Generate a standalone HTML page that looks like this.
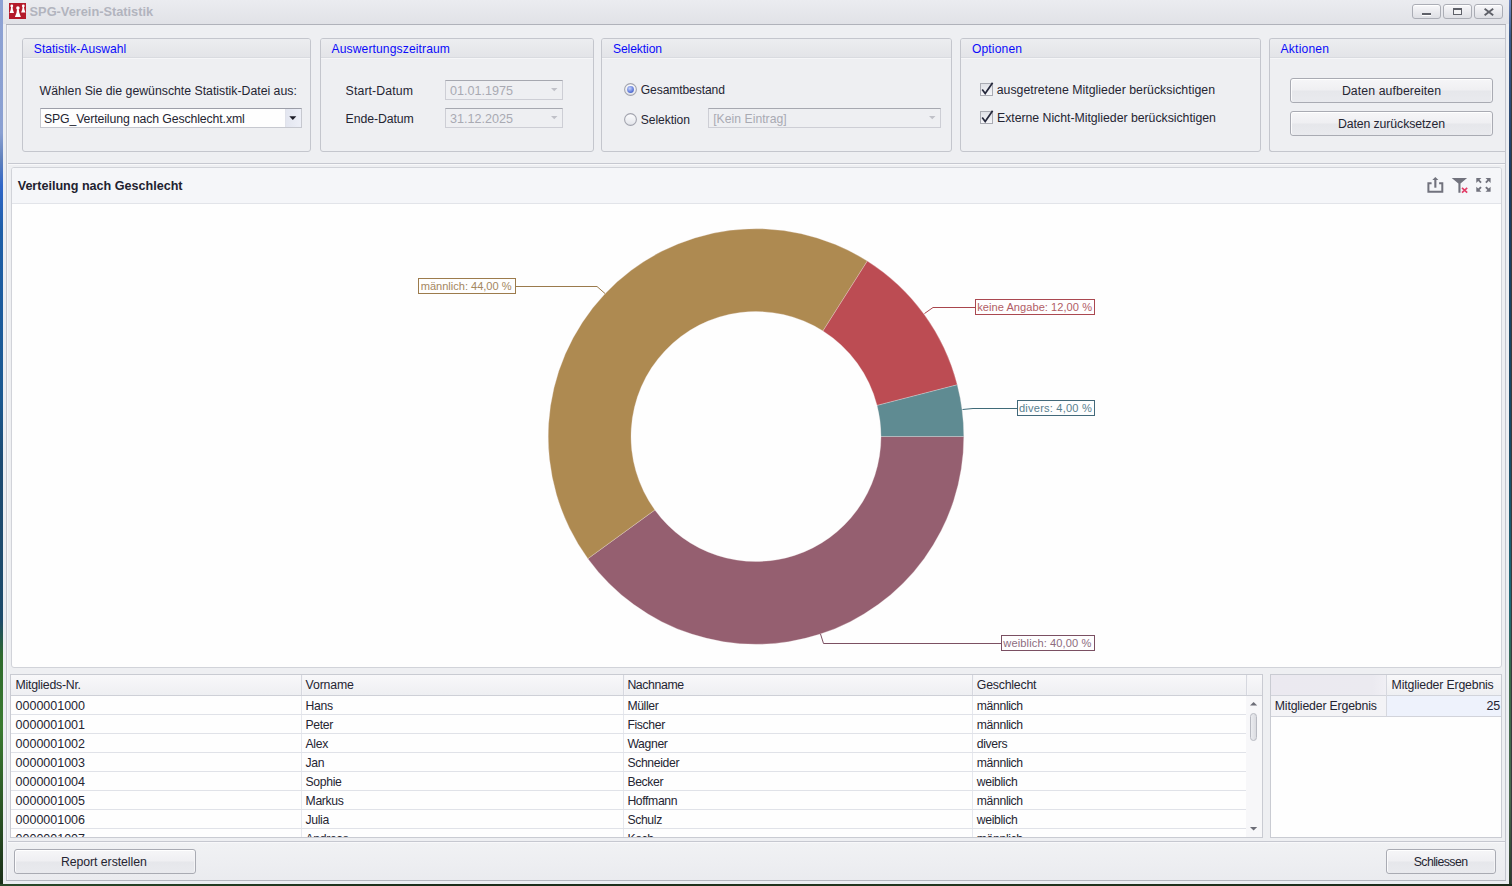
<!DOCTYPE html><html><head><meta charset="utf-8"><style>
*{margin:0;padding:0;box-sizing:border-box}
html,body{width:1512px;height:886px;overflow:hidden;background:#1d3322}
body{position:relative;font-family:"Liberation Sans",sans-serif}
.t{position:absolute;white-space:nowrap;line-height:14px}
.btn{position:absolute;border:1px solid #a9abb3;border-radius:3px;background:linear-gradient(#f6f6f8 0%,#efeff2 48%,#e6e7eb 52%,#e9eaee 100%);box-shadow:inset 0 1px 0 #fff,inset 1px 0 0 #fbfbfc,inset -1px 0 0 #f4f4f6}
</style></head><body><div style="position:absolute;left:0px;top:0px;width:3px;height:886px;background:linear-gradient(#8ea2d4 0%,#8aa0d2 15%,#5f80bc 18%,#2f66c8 21%,#1c5ea8 26%,#1a5890 45%,#1b4a72 52%,#1d4a6a 70%,#2e6a2c 74%,#3a7a30 82%,#2a5224 92%,#1a2e18 100%)"></div>
<div style="position:absolute;left:1509px;top:0px;width:2px;height:886px;background:linear-gradient(#7088c0 0%,#3a5a8a 4%,#1c3c62 20%,#1a4a66 50%,#1e6a78 68%,#3a6a4a 76%,#4a6a50 90%,#2a3a2a 100%)"></div>
<div style="position:absolute;left:1511px;top:0px;width:1px;height:886px;background:#3a3a3c"></div>
<div style="position:absolute;left:0px;top:884px;width:1512px;height:2px;background:linear-gradient(90deg,#2a4a2a,#1c2c1a 30%,#23361f 60%,#1c2a1a)"></div>
<div style="position:absolute;left:3px;top:0px;width:1506px;height:884px;background:#eceef2"></div>
<div style="position:absolute;left:3px;top:0px;width:1506px;height:24px;background:linear-gradient(#ebecf0,#e1e2e7)"></div>
<div style="position:absolute;left:6px;top:24px;width:1500px;height:1px;background:#b0b2ba"></div>
<div style="position:absolute;left:6px;top:25px;width:1px;height:856px;background:#c4c6ce"></div>
<div style="position:absolute;left:7px;top:25px;width:1px;height:855px;background:#f6f7f9"></div>
<div style="position:absolute;left:1505px;top:25px;width:1px;height:856px;background:#c4c6ce"></div>
<div style="position:absolute;left:6px;top:880px;width:1500px;height:1px;background:#b6b8c0"></div>
<div style="position:absolute;left:8px;top:25px;width:1497px;height:855px;background:#eeeff2"></div>
<svg style="position:absolute;left:9px;top:3px" width="17" height="16" viewBox="0 0 17 16">
<rect width="17" height="16" fill="#b41a2a"/>
<g fill="#fff">
<circle cx="2.8" cy="3.0" r="1.4"/><path d="M2.1 4.1 h1.4 l0.4 2.6 l1.1 3.3 h-4.4 l1.1 -3.3 z"/>
<circle cx="14.3" cy="2.9" r="1.4"/><path d="M13.6 4.0 h1.4 l0.4 2.5 l1.1 3.0 h-4.4 l1.1 -3.0 z"/>
<circle cx="8.9" cy="4.9" r="1.75"/><path d="M8.0 6.3 h1.8 l0.5 3.4 l1.6 4.2 h-6.0 l1.6 -4.2 z"/>
</g></svg>
<div class="t" style="left:29.60px;top:5px;font-size:12.8px;color:#b2b4be;font-weight:bold;letter-spacing:-0.011px;">SPG-Verein-Statistik</div>
<div style="position:absolute;left:1412px;top:4px;width:29px;height:15px;border:1px solid #abadb5;border-radius:3px;background:linear-gradient(#f8f8fa 0%,#ebebef 50%,#dedfe4 100%);box-shadow:inset 0 1px 0 #fff"><div style="position:absolute;left:9px;top:8px;width:9px;height:2px;background:#5e6068;box-shadow:0 1px 0 #fff"></div></div>
<div style="position:absolute;left:1443px;top:4px;width:29px;height:15px;border:1px solid #abadb5;border-radius:3px;background:linear-gradient(#f8f8fa 0%,#ebebef 50%,#dedfe4 100%);box-shadow:inset 0 1px 0 #fff"><div style="position:absolute;left:9px;top:3px;width:9px;height:7px;border:1.5px solid #5e6068;border-top-width:2px;background:#f2f2f4"></div></div>
<div style="position:absolute;left:1474px;top:4px;width:29px;height:15px;border:1px solid #abadb5;border-radius:3px;background:linear-gradient(#f8f8fa 0%,#ebebef 50%,#dedfe4 100%);box-shadow:inset 0 1px 0 #fff"><svg style="position:absolute;left:8px;top:3px" width="12" height="8" viewBox="0 0 12 8"><path d="M1.6 0.8 L10.2 7.2 M10.2 0.8 L1.6 7.2" stroke="#5e6068" stroke-width="1.9"/></svg></div>
<div style="position:absolute;left:8px;top:163px;width:1497px;height:1px;background:#c6c8d0"></div>
<div style="position:absolute;left:8px;top:164px;width:1497px;height:1px;background:#f8f8fa"></div>
<div style="position:absolute;left:22px;top:38px;width:289px;height:114px;border:1px solid #c4c6cd;border-radius:3px;background:#eeeff2;overflow:hidden"><div style="position:absolute;left:0;top:0;right:0;height:19px;background:linear-gradient(#ecedf0,#e3e4e8);border-bottom:1px solid #d9dbe0;box-shadow:0 1px 0 #f6f6f8"></div></div>
<div class="t" style="left:33.80px;top:42px;font-size:12.1px;color:#0b0bfa;font-weight:normal;letter-spacing:0.016px;">Statistik-Auswahl</div>
<div style="position:absolute;left:320px;top:38px;width:274px;height:114px;border:1px solid #c4c6cd;border-radius:3px;background:#eeeff2;overflow:hidden"><div style="position:absolute;left:0;top:0;right:0;height:19px;background:linear-gradient(#ecedf0,#e3e4e8);border-bottom:1px solid #d9dbe0;box-shadow:0 1px 0 #f6f6f8"></div></div>
<div class="t" style="left:331.50px;top:42px;font-size:12.1px;color:#0b0bfa;font-weight:normal;letter-spacing:0.119px;">Auswertungszeitraum</div>
<div style="position:absolute;left:601px;top:38px;width:351px;height:114px;border:1px solid #c4c6cd;border-radius:3px;background:#eeeff2;overflow:hidden"><div style="position:absolute;left:0;top:0;right:0;height:19px;background:linear-gradient(#ecedf0,#e3e4e8);border-bottom:1px solid #d9dbe0;box-shadow:0 1px 0 #f6f6f8"></div></div>
<div class="t" style="left:612.90px;top:42px;font-size:12.1px;color:#0b0bfa;font-weight:normal;letter-spacing:-0.075px;">Selektion</div>
<div style="position:absolute;left:960px;top:38px;width:301px;height:114px;border:1px solid #c4c6cd;border-radius:3px;background:#eeeff2;overflow:hidden"><div style="position:absolute;left:0;top:0;right:0;height:19px;background:linear-gradient(#ecedf0,#e3e4e8);border-bottom:1px solid #d9dbe0;box-shadow:0 1px 0 #f6f6f8"></div></div>
<div class="t" style="left:971.90px;top:42px;font-size:12.1px;color:#0b0bfa;font-weight:normal;letter-spacing:0.157px;">Optionen</div>
<div style="position:absolute;left:1269px;top:38px;width:236px;height:114px;border:1px solid #c4c6cd;border-radius:3px;border-right:none;border-radius:3px 0 0 3px;background:#eeeff2;overflow:hidden"><div style="position:absolute;left:0;top:0;right:0;height:19px;background:linear-gradient(#ecedf0,#e3e4e8);border-bottom:1px solid #d9dbe0;box-shadow:0 1px 0 #f6f6f8"></div></div>
<div class="t" style="left:1280.60px;top:42px;font-size:12.1px;color:#0b0bfa;font-weight:normal;letter-spacing:0.186px;">Aktionen</div>
<div class="t" style="left:39.60px;top:84px;font-size:12.3px;color:#252532;font-weight:normal;letter-spacing:-0.010px;">Wählen Sie die gewünschte Statistik-Datei aus:</div>
<div style="position:absolute;left:40px;top:108px;width:262px;height:20px;border:1px solid #c6c8cf;border-top-color:#9c9ea8;background:#fefefe"></div>
<div style="position:absolute;left:285px;top:109px;width:16px;height:18px;background:linear-gradient(90deg,#e3e6f0,#edeff7);border-left:1px solid #e0e2ea"></div>
<svg style="position:absolute;left:289px;top:116px" width="8" height="5"><path d="M0.3 0.3 L7.3 0.3 L3.8 4 Z" fill="#1d1d28"/></svg>
<div class="t" style="left:43.90px;top:112px;font-size:12.3px;color:#252532;font-weight:normal;letter-spacing:-0.127px;">SPG_Verteilung nach Geschlecht.xml</div>
<div class="t" style="left:345.60px;top:84px;font-size:12.3px;color:#252532;font-weight:normal;letter-spacing:0.110px;">Start-Datum</div>
<div class="t" style="left:345.60px;top:112px;font-size:12.3px;color:#252532;font-weight:normal;letter-spacing:-0.106px;">Ende-Datum</div>
<div style="position:absolute;left:445px;top:80px;width:118px;height:20px;border:1px solid #cdced5;border-top-color:#a6a8b0;background:#eeeff2"></div>
<svg style="position:absolute;left:551px;top:88px" width="7" height="4"><path d="M0 0 L6.5 0 L3.25 3.2 Z" fill="#c0c1c8"/></svg>
<div class="t" style="left:449.90px;top:84px;font-size:12.6px;color:#a9aab3;font-weight:normal;letter-spacing:0.017px;">01.01.1975</div>
<div style="position:absolute;left:445px;top:108px;width:118px;height:20px;border:1px solid #cdced5;border-top-color:#a6a8b0;background:#eeeff2"></div>
<svg style="position:absolute;left:551px;top:116px" width="7" height="4"><path d="M0 0 L6.5 0 L3.25 3.2 Z" fill="#c0c1c8"/></svg>
<div class="t" style="left:449.90px;top:112px;font-size:12.6px;color:#a9aab3;font-weight:normal;letter-spacing:0.017px;">31.12.2025</div>
<svg style="position:absolute;left:0;top:0;width:0;height:0"><defs>
<radialGradient id="rg" cx="0.4" cy="0.35" r="0.75"><stop offset="0" stop-color="#c8d4fa"/><stop offset="0.6" stop-color="#6f88e0"/><stop offset="1" stop-color="#3a56c0"/></radialGradient>
<linearGradient id="rb" x1="0" y1="0" x2="0" y2="1"><stop offset="0" stop-color="#fdfdfe"/><stop offset="1" stop-color="#e2e4ea"/></linearGradient>
</defs></svg>
<svg style="position:absolute;left:623.5px;top:82.9px" width="13" height="13" viewBox="0 0 13 13"><circle cx="6.5" cy="6.5" r="5.9" fill="url(#rb)" stroke="#a2a4ae" stroke-width="1.1"/><circle cx="6.5" cy="6.5" r="3.4" fill="url(#rg)"/></svg>
<svg style="position:absolute;left:623.5px;top:113.0px" width="13" height="13" viewBox="0 0 13 13"><circle cx="6.5" cy="6.5" r="5.9" fill="url(#rb)" stroke="#a2a4ae" stroke-width="1.1"/></svg>
<div class="t" style="left:640.80px;top:83px;font-size:12.1px;color:#252532;font-weight:normal;letter-spacing:-0.108px;">Gesamtbestand</div>
<div class="t" style="left:640.80px;top:113px;font-size:12.1px;color:#252532;font-weight:normal;letter-spacing:-0.075px;">Selektion</div>
<div style="position:absolute;left:708px;top:108px;width:233px;height:20px;border:1px solid #cdced5;border-top-color:#a6a8b0;background:#eeeff2"></div>
<svg style="position:absolute;left:929px;top:116px" width="7" height="4"><path d="M0 0 L6.5 0 L3.25 3.2 Z" fill="#c0c1c8"/></svg>
<div class="t" style="left:713.20px;top:112px;font-size:12.2px;color:#a9aab3;font-weight:normal;letter-spacing:0.027px;">[Kein Eintrag]</div>
<div style="position:absolute;left:980px;top:83px;width:13px;height:13px;border:1px solid #a9abb3;background:linear-gradient(#dfe1e7,#f6f6f9)"></div>
<svg style="position:absolute;left:980px;top:82px" width="14" height="14" viewBox="0 0 14 14"><path d="M2.2 7.6 L5.2 11.6 L12.6 0.8" fill="none" stroke="#25283c" stroke-width="1.7"/></svg>
<div style="position:absolute;left:980px;top:111px;width:13px;height:13px;border:1px solid #a9abb3;background:linear-gradient(#dfe1e7,#f6f6f9)"></div>
<svg style="position:absolute;left:980px;top:110px" width="14" height="14" viewBox="0 0 14 14"><path d="M2.2 7.6 L5.2 11.6 L12.6 0.8" fill="none" stroke="#25283c" stroke-width="1.7"/></svg>
<div class="t" style="left:996.70px;top:83px;font-size:12.3px;color:#252532;font-weight:normal;letter-spacing:0.024px;">ausgetretene Mitglieder berücksichtigen</div>
<div class="t" style="left:997.00px;top:111px;font-size:12.3px;color:#252532;font-weight:normal;letter-spacing:-0.029px;">Externe Nicht-Mitglieder berücksichtigen</div>
<div class="btn" style="left:1290px;top:78px;width:203px;height:25px"></div>
<div class="btn" style="left:1290px;top:111px;width:203px;height:25px"></div>
<div class="t" style="left:1341.90px;top:84px;font-size:12.3px;color:#252532;font-weight:normal;letter-spacing:0.087px;">Daten aufbereiten</div>
<div class="t" style="left:1337.90px;top:117px;font-size:12.3px;color:#252532;font-weight:normal;letter-spacing:-0.094px;">Daten zurücksetzen</div>
<div style="position:absolute;left:11px;top:167px;width:1491px;height:501px;border:1px solid #d1d3d9;border-radius:3px;background:#fefefe;overflow:hidden"><div style="position:absolute;left:0;top:0;right:0;height:36px;background:#f5f6f9;border-bottom:1px solid #e2e4e9"></div></div>
<div class="t" style="left:17.70px;top:179px;font-size:12.6px;color:#222230;font-weight:bold;letter-spacing:-0.014px;">Verteilung nach Geschlecht</div>
<svg style="position:absolute;left:1420px;top:170px" width="80" height="30" viewBox="0 0 80 30">
<g fill="#71727d">
<path d="M7.4 12.2 h4.2 v2 h-2.2 v6.6 h11.9 v-6.6 h-2.2 v-2 h4.2 v10.6 h-15.9 z"/>
<rect x="14.3" y="9.4" width="2.1" height="8.3"/>
<path d="M12.3 9.9 L15.35 6.9 L18.4 9.9 Z"/>
<path d="M31.7 7.9 H47.1 L40.5 13.6 V22.8 H38.4 V13.6 Z"/>
<path d="M56.3 7.9 h5.1 l-1.9 1.9 l2.2 2.2 l-1.3 1.3 l-2.2 -2.2 l-1.9 1.9 z"/>
<path d="M70.6 7.9 h-5.1 l1.9 1.9 l-2.2 2.2 l1.3 1.3 l2.2 -2.2 l1.9 1.9 z"/>
<path d="M56.3 21.8 h5.1 l-1.9 -1.9 l2.2 -2.2 l-1.3 -1.3 l-2.2 2.2 l-1.9 -1.9 z"/>
<path d="M70.6 21.8 h-5.1 l1.9 -1.9 l-2.2 -2.2 l1.3 -1.3 l2.2 2.2 l1.9 -1.9 z"/>
</g>
<path d="M42 17.8 L47.2 22.6 M47.2 17.8 L42 22.6" stroke="#e23c66" stroke-width="1.6"/>
</svg>
<svg style="position:absolute;left:0;top:0" width="1512" height="886"><path d="M963.80 436.50 A207.8 207.8 0 0 1 587.89 558.64 L654.87 509.97 A125 125 0 0 0 881.00 436.50 Z" fill="#955f70" stroke="#f0e8e8" stroke-width="0.3"/><path d="M587.89 558.64 A207.8 207.8 0 0 1 867.34 261.05 L822.98 330.96 A125 125 0 0 0 654.87 509.97 Z" fill="#ae8a51" stroke="#f0e8e8" stroke-width="0.3"/><path d="M867.34 261.05 A207.8 207.8 0 0 1 957.27 384.82 L877.07 405.41 A125 125 0 0 0 822.98 330.96 Z" fill="#bc4c53" stroke="#f0e8e8" stroke-width="0.3"/><path d="M957.27 384.82 A207.8 207.8 0 0 1 963.80 436.50 L881.00 436.50 A125 125 0 0 0 877.07 405.41 Z" fill="#5f8b92" stroke="#f0e8e8" stroke-width="0.3"/><polyline points="515.5,286.5 597,286.5 605,293.5" fill="none" stroke="#9a7a4c" stroke-width="1"/><polyline points="975,307.5 933,307.5 924.5,313.5" fill="none" stroke="#a8454c" stroke-width="1"/><polyline points="1017,408.5 973,408.5 962.5,409.5" fill="none" stroke="#3f6a78" stroke-width="1"/><polyline points="1001,643.5 823.5,643.5 820.5,634" fill="none" stroke="#7c5062" stroke-width="1"/></svg>
<div style="position:absolute;left:418px;top:278px;width:97.5px;height:16px;border:1px solid #9c7b4c;background:#fefefe"></div>
<div class="t" style="left:420.70px;top:279px;font-size:11.1px;color:#a4875e;font-weight:normal;letter-spacing:-0.025px;">männlich: 44,00 %</div>
<div style="position:absolute;left:975px;top:299px;width:120px;height:16px;border:1px solid #aa4850;background:#fefefe"></div>
<div class="t" style="left:977.20px;top:300px;font-size:11.1px;color:#b15d65;font-weight:normal;letter-spacing:0.035px;">keine Angabe: 12,00 %</div>
<div style="position:absolute;left:1017px;top:400px;width:78px;height:16px;border:1px solid #42697a;background:#fefefe"></div>
<div class="t" style="left:1019.00px;top:401px;font-size:11.1px;color:#58808f;font-weight:normal;letter-spacing:0.196px;">divers: 4,00 %</div>
<div style="position:absolute;left:1001px;top:635px;width:94px;height:16px;border:1px solid #7a4f62;background:#fefefe"></div>
<div class="t" style="left:1003.35px;top:636px;font-size:11.1px;color:#8d6c7e;font-weight:normal;letter-spacing:0.109px;">weiblich: 40,00 %</div>
<div style="position:absolute;left:10px;top:674px;width:1253px;height:164px;border:1px solid #c9cbd2;background:#fefefe"></div>
<div style="position:absolute;left:11px;top:675px;width:1251px;height:20px;background:linear-gradient(#f8f8fa,#eeeff2)"></div>
<div style="position:absolute;left:11px;top:695px;width:1251px;height:1px;background:#ced0d7"></div>
<div style="position:absolute;left:301px;top:675px;width:1px;height:20px;background:#d6d8df"></div>
<div style="position:absolute;left:302px;top:675px;width:1px;height:20px;background:#f4f4f7"></div>
<div style="position:absolute;left:623px;top:675px;width:1px;height:20px;background:#d6d8df"></div>
<div style="position:absolute;left:624px;top:675px;width:1px;height:20px;background:#f4f4f7"></div>
<div style="position:absolute;left:972px;top:675px;width:1px;height:20px;background:#d6d8df"></div>
<div style="position:absolute;left:973px;top:675px;width:1px;height:20px;background:#f4f4f7"></div>
<div style="position:absolute;left:1246px;top:675px;width:1px;height:20px;background:#d6d8df"></div>
<div style="position:absolute;left:1247px;top:675px;width:1px;height:20px;background:#f4f4f7"></div>
<div style="position:absolute;left:301px;top:696px;width:1px;height:141px;background:#e6e8ee"></div>
<div style="position:absolute;left:623px;top:696px;width:1px;height:141px;background:#e6e8ee"></div>
<div style="position:absolute;left:972px;top:696px;width:1px;height:141px;background:#e6e8ee"></div>
<div style="position:absolute;left:1246px;top:696px;width:16px;height:141px;background:#f7f7f9"></div>
<svg style="position:absolute;left:1250px;top:702px" width="8" height="4"><path d="M0 3.6 L3.6 0 L7.2 3.6 Z" fill="#6c6d77"/></svg>
<svg style="position:absolute;left:1250px;top:827px" width="8" height="4"><path d="M0 0 L3.6 3.6 L7.2 0 Z" fill="#6c6d77"/></svg>
<div style="position:absolute;left:1250px;top:713px;width:7px;height:28px;border:1px solid #b8bac2;border-radius:4px;background:linear-gradient(90deg,#ebecf0,#dadbe0)"></div>
<div style="position:absolute;left:11px;top:714px;width:1235px;height:1px;background:#e0e2e8"></div>
<div style="position:absolute;left:11px;top:733px;width:1235px;height:1px;background:#e0e2e8"></div>
<div style="position:absolute;left:11px;top:752px;width:1235px;height:1px;background:#e0e2e8"></div>
<div style="position:absolute;left:11px;top:771px;width:1235px;height:1px;background:#e0e2e8"></div>
<div style="position:absolute;left:11px;top:790px;width:1235px;height:1px;background:#e0e2e8"></div>
<div style="position:absolute;left:11px;top:809px;width:1235px;height:1px;background:#e0e2e8"></div>
<div style="position:absolute;left:11px;top:828px;width:1235px;height:1px;background:#e0e2e8"></div>
<div class="t" style="left:15.60px;top:678px;font-size:12.3px;color:#252532;font-weight:normal;letter-spacing:-0.246px;">Mitglieds-Nr.</div>
<div class="t" style="left:305.60px;top:678px;font-size:12.3px;color:#252532;font-weight:normal;letter-spacing:-0.158px;">Vorname</div>
<div class="t" style="left:627.40px;top:678px;font-size:12.3px;color:#252532;font-weight:normal;letter-spacing:-0.400px;">Nachname</div>
<div class="t" style="left:976.80px;top:678px;font-size:12.3px;color:#252532;font-weight:normal;letter-spacing:-0.206px;">Geschlecht</div>
<div style="position:absolute;left:0;top:696px;width:1246px;height:141px;overflow:hidden">
<div class="t" style="left:15.60px;top:3px;font-size:12.5px;color:#252532;font-weight:normal;letter-spacing:-0.011px;">0000001000</div>
<div class="t" style="left:305.60px;top:3px;font-size:12.2px;color:#252532;font-weight:normal;letter-spacing:-0.350px;">Hans</div>
<div class="t" style="left:627.40px;top:3px;font-size:12.2px;color:#252532;font-weight:normal;letter-spacing:-0.350px;">Müller</div>
<div class="t" style="left:976.80px;top:3px;font-size:12.2px;color:#252532;font-weight:normal;letter-spacing:-0.350px;">männlich</div>
<div class="t" style="left:15.60px;top:22px;font-size:12.5px;color:#252532;font-weight:normal;letter-spacing:-0.011px;">0000001001</div>
<div class="t" style="left:305.60px;top:22px;font-size:12.2px;color:#252532;font-weight:normal;letter-spacing:-0.350px;">Peter</div>
<div class="t" style="left:627.40px;top:22px;font-size:12.2px;color:#252532;font-weight:normal;letter-spacing:-0.350px;">Fischer</div>
<div class="t" style="left:976.80px;top:22px;font-size:12.2px;color:#252532;font-weight:normal;letter-spacing:-0.350px;">männlich</div>
<div class="t" style="left:15.60px;top:41px;font-size:12.5px;color:#252532;font-weight:normal;letter-spacing:-0.011px;">0000001002</div>
<div class="t" style="left:305.60px;top:41px;font-size:12.2px;color:#252532;font-weight:normal;letter-spacing:-0.350px;">Alex</div>
<div class="t" style="left:627.40px;top:41px;font-size:12.2px;color:#252532;font-weight:normal;letter-spacing:-0.350px;">Wagner</div>
<div class="t" style="left:976.80px;top:41px;font-size:12.2px;color:#252532;font-weight:normal;letter-spacing:-0.350px;">divers</div>
<div class="t" style="left:15.60px;top:60px;font-size:12.5px;color:#252532;font-weight:normal;letter-spacing:-0.011px;">0000001003</div>
<div class="t" style="left:305.60px;top:60px;font-size:12.2px;color:#252532;font-weight:normal;letter-spacing:-0.350px;">Jan</div>
<div class="t" style="left:627.40px;top:60px;font-size:12.2px;color:#252532;font-weight:normal;letter-spacing:-0.350px;">Schneider</div>
<div class="t" style="left:976.80px;top:60px;font-size:12.2px;color:#252532;font-weight:normal;letter-spacing:-0.350px;">männlich</div>
<div class="t" style="left:15.60px;top:79px;font-size:12.5px;color:#252532;font-weight:normal;letter-spacing:-0.011px;">0000001004</div>
<div class="t" style="left:305.60px;top:79px;font-size:12.2px;color:#252532;font-weight:normal;letter-spacing:-0.350px;">Sophie</div>
<div class="t" style="left:627.40px;top:79px;font-size:12.2px;color:#252532;font-weight:normal;letter-spacing:-0.350px;">Becker</div>
<div class="t" style="left:976.85px;top:79px;font-size:12.2px;color:#252532;font-weight:normal;letter-spacing:-0.350px;">weiblich</div>
<div class="t" style="left:15.60px;top:98px;font-size:12.5px;color:#252532;font-weight:normal;letter-spacing:-0.011px;">0000001005</div>
<div class="t" style="left:305.60px;top:98px;font-size:12.2px;color:#252532;font-weight:normal;letter-spacing:-0.350px;">Markus</div>
<div class="t" style="left:627.40px;top:98px;font-size:12.2px;color:#252532;font-weight:normal;letter-spacing:-0.350px;">Hoffmann</div>
<div class="t" style="left:976.80px;top:98px;font-size:12.2px;color:#252532;font-weight:normal;letter-spacing:-0.350px;">männlich</div>
<div class="t" style="left:15.60px;top:117px;font-size:12.5px;color:#252532;font-weight:normal;letter-spacing:-0.011px;">0000001006</div>
<div class="t" style="left:305.60px;top:117px;font-size:12.2px;color:#252532;font-weight:normal;letter-spacing:-0.350px;">Julia</div>
<div class="t" style="left:627.40px;top:117px;font-size:12.2px;color:#252532;font-weight:normal;letter-spacing:-0.350px;">Schulz</div>
<div class="t" style="left:976.85px;top:117px;font-size:12.2px;color:#252532;font-weight:normal;letter-spacing:-0.350px;">weiblich</div>
<div class="t" style="left:15.60px;top:136px;font-size:12.5px;color:#252532;font-weight:normal;letter-spacing:-0.011px;">0000001007</div>
<div class="t" style="left:305.60px;top:136px;font-size:12.2px;color:#252532;font-weight:normal;letter-spacing:-0.350px;">Andreas</div>
<div class="t" style="left:627.40px;top:136px;font-size:12.2px;color:#252532;font-weight:normal;letter-spacing:-0.350px;">Koch</div>
<div class="t" style="left:976.80px;top:136px;font-size:12.2px;color:#252532;font-weight:normal;letter-spacing:-0.350px;">männlich</div>
</div>
<div style="position:absolute;left:1270px;top:674px;width:232px;height:164px;border:1px solid #c9cbd2;background:#fefefe"></div>
<div style="position:absolute;left:1271px;top:675px;width:115px;height:20px;background:linear-gradient(90deg,#ebe9f0 0%,#ebeaf0 88%,#f0eff4 100%)"></div>
<div style="position:absolute;left:1387px;top:675px;width:114px;height:20px;background:linear-gradient(#f8f8fa,#eeeff2)"></div>
<div style="position:absolute;left:1271px;top:695px;width:230px;height:1px;background:#d2d4db"></div>
<div style="position:absolute;left:1271px;top:696px;width:115px;height:20px;background:#f3f3f6"></div>
<div style="position:absolute;left:1387px;top:696px;width:114px;height:20px;background:#eef2fc"></div>
<div style="position:absolute;left:1386px;top:675px;width:1px;height:41px;background:#d6d8df"></div>
<div style="position:absolute;left:1271px;top:716px;width:230px;height:1px;background:#d2d4db"></div>
<div class="t" style="left:1391.60px;top:678px;font-size:12.3px;color:#252532;font-weight:normal;letter-spacing:-0.172px;">Mitglieder Ergebnis</div>
<div class="t" style="left:1274.80px;top:699px;font-size:12.3px;color:#252532;font-weight:normal;letter-spacing:-0.178px;">Mitglieder Ergebnis</div>
<div class="t" style="left:1486.40px;top:699px;font-size:12.5px;color:#252532;font-weight:normal;letter-spacing:-0.000px;">25</div>
<div style="position:absolute;left:8px;top:842px;width:1497px;height:38px;background:linear-gradient(#f1f2f4,#eaebef)"></div>
<div style="position:absolute;left:8px;top:841px;width:1497px;height:1px;background:#c6c8d0"></div>
<div style="position:absolute;left:8px;top:842px;width:1497px;height:1px;background:#f8f8fa"></div>
<div class="btn" style="left:14px;top:849px;width:182px;height:25px"></div>
<div class="btn" style="left:1386px;top:849px;width:110px;height:25px"></div>
<div class="t" style="left:60.90px;top:855px;font-size:12.3px;color:#252532;font-weight:normal;letter-spacing:-0.057px;">Report erstellen</div>
<div class="t" style="left:1413.70px;top:855px;font-size:12.3px;color:#252532;font-weight:normal;letter-spacing:-0.567px;">Schliessen</div></body></html>
